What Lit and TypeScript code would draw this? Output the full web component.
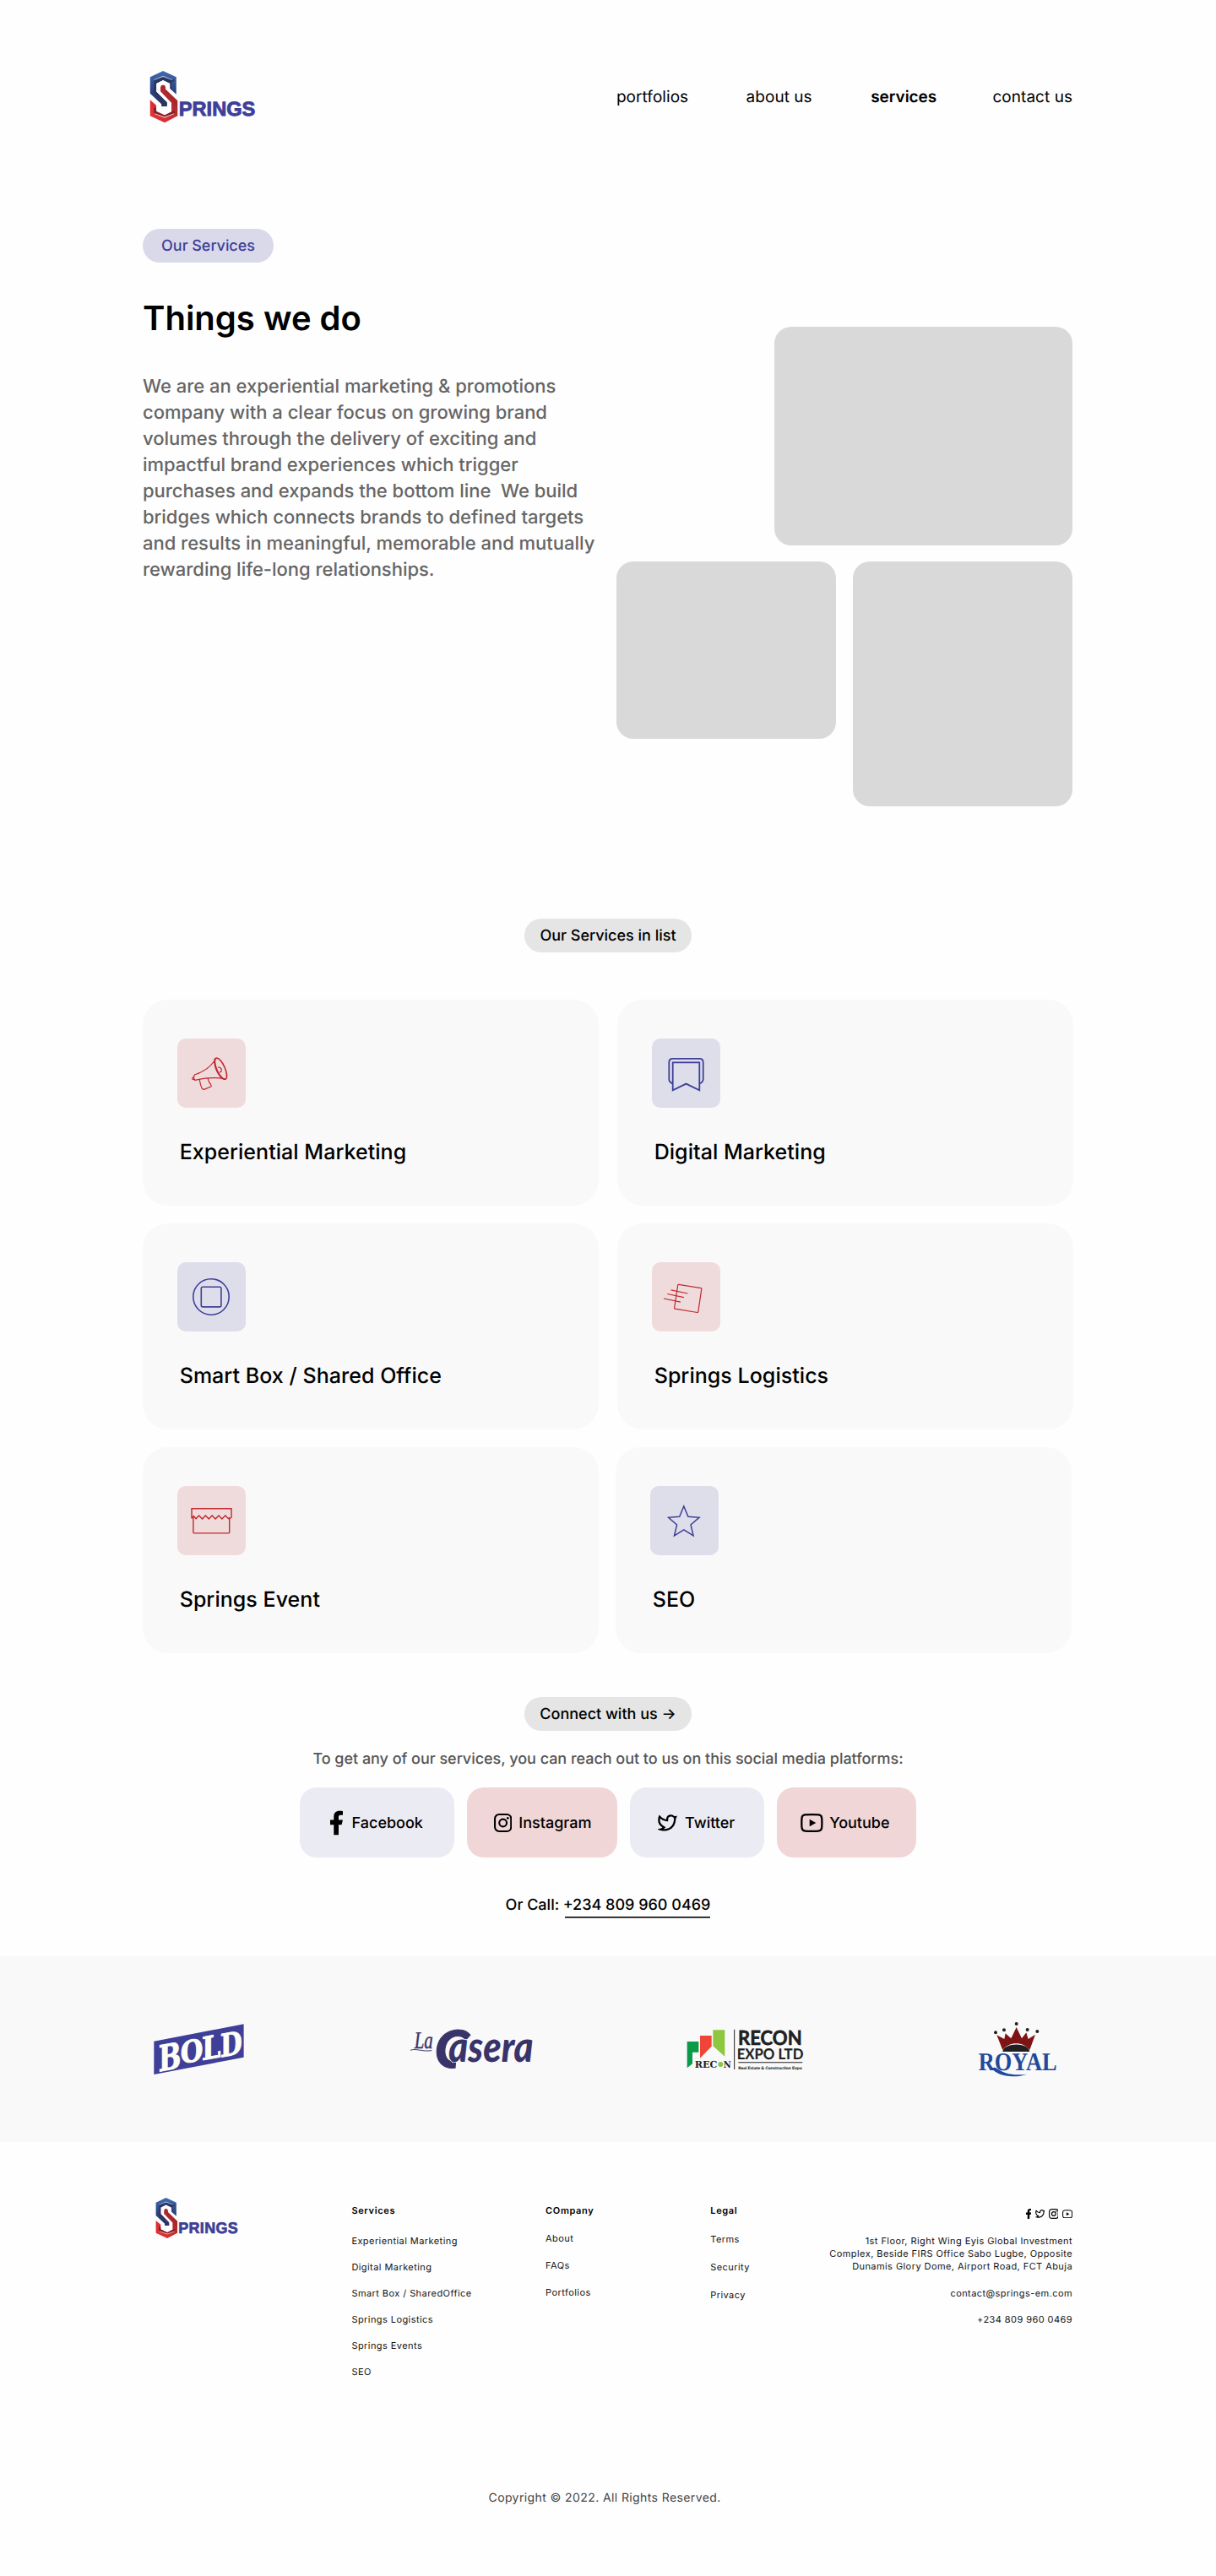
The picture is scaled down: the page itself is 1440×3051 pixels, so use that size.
import { LitElement, html, css, svg, nothing } from "lit";
import { customElement, property } from "lit/decorators.js";

const RED = "#c0282d";
const BLUE = "#3e3f98";

const facebook = html`<svg class="ico fb" viewBox="7 2 10.5 20"><path d="M14 13.5h2.5l1-4H14v-2c0-1.03 0-2 2-2h1.5V2.14c-.326-.043-1.557-.14-2.857-.14C11.928 2 10 3.657 10 6.7v2.8H7v4h3V22h4v-8.5z"/></svg>`;
const instagram = html`<svg class="ico ig" viewBox="0 0 21.3 22"><rect x="1.05" y="1.05" width="19.2" height="19.9" rx="5" fill="none" stroke="#000" stroke-width="2.1"/><circle cx="10.65" cy="11" r="4.4" fill="none" stroke="#000" stroke-width="2.1"/><circle cx="16.3" cy="5.4" r="1.4"/></svg>`;
const twitter = html`<svg class="ico tw" viewBox="1.86 3.38 19.6 17"><path d="M15.3 5.55a2.9 2.9 0 0 0-2.9 2.847l-.028 1.575a.6.6 0 0 1-.68.583l-1.561-.212c-2.054-.28-4.022-1.226-5.91-2.799-.598 3.31.57 5.603 3.383 7.372l1.747 1.098a.6.6 0 0 1 .034.993L7.793 18.17c.947.059 1.846.017 2.592-.131 4.718-.942 7.855-4.492 7.855-10.348 0-.478-1.012-2.141-2.94-2.141zm-4.9 2.81a4.9 4.9 0 0 1 8.385-3.355c.711-.005 1.316.175 2.669-.645-.335 1.64-.5 2.352-1.214 3.331 0 7.642-4.697 11.358-9.463 12.309-3.268.652-8.02-.419-9.382-1.841.694-.054 3.514-.357 5.144-1.55C5.16 15.7-.329 12.47 3.278 3.786c1.693 1.977 3.41 3.323 5.15 4.037 1.158.475 1.442.465 1.973.538z"/></svg>`;
const youtube = html`<svg class="ico yt" viewBox="0 0 26.7 22"><path fill="none" stroke="#000" stroke-width="2.3" d="M13.35 1.15c4 0 6.500.1 8.100.3 2.300.3 3.500 1.500 3.700 3.600.2 1.900.25 3.600.25 5.950s-.05 4.050-.25 5.950c-.2 2.100-1.400 3.300-3.700 3.600-1.600.2-4.100.3-8.100.3s-6.500-.1-8.100-.3c-2.300-.3-3.500-1.500-3.700-3.600-.2-1.900-.25-3.600-.25-5.950s.05-4.050.25-5.950c.2-2.100 1.400-3.300 3.700-3.600 1.600-.2 4.100-.3 8.100-.3z"/><path d="M10.700 6.700l7.600 4.300-7.600 4.300z"/></svg>`;

const icons: Record<string, unknown> = {
  megaphone: svg`<g stroke=${RED} stroke-width="1.2" stroke-linejoin="round">
    <ellipse cx="51.500" cy="35.700" rx="4.800" ry="13.600" transform="rotate(-24 51.500 35.700)" stroke-width="1.600"/>
    <path d="M44.800 23.300c-2 2.500-1 9.500 2.500 16.500 3 5.800 6.500 9 10 8.500"/>
    <path d="M43.500 27c-5.500 7.800-13 12.700-23.200 16l-.9 3.400 1.500 3c10-2 21-4.200 35.500-1.600"/>
    <path d="M19.700 45.500l-1.900 1.300.3 1.700 2.200.2M26.200 48.500c.6 4.200 1.700 8.100 3.300 11.200l2.400.7 8.300-3.600-.2-1.600c-2-2.100-3.300-5.200-4.100-8.500"/>
    <path d="M47.800 34.200c2-.7 4.300.6 4.500 2.900.1 1.600-.9 2.700-2.300 3"/></g>`,
  bookmark: svg`<g stroke=${BLUE} stroke-width="1.800">
    <path d="M24.300 53.300c-2.300-.9-4-2.600-4-5.200V28.300c0-2.700 1.700-4.400 4.400-4.400h31.600c2.700 0 4.400 1.700 4.400 4.400v19.800c0 2.600-1.400 4.300-4 5.200"/>
    <path d="M24.700 28.400h31.600v32.900l-15.800-7.700-15.800 7.700z"/></g>`,
  box: svg`<g stroke=${BLUE} stroke-width="1.600"><circle cx="40" cy="41" r="21.200"/><rect x="28.300" y="29.300" width="23.600" height="23.600" rx="1.800"/></g>`,
  parcel: svg`<g stroke=${RED} stroke-width="1.200">
    <path stroke-linejoin="round" d="M31.700 26.400l26.300 4.200c.6.100.9.400.8 1l-4 27.100c-.1.600-.4.900-1 .8l-26.400-4.300c-.6-.1-.9-.4-.8-1l4.100-27c.1-.6.400-.9 1-.8z"/>
    <path d="M22.600 32.800l19.700 4.200M18.200 37.500l19.700 4.200M14 43l19.900 4.200"/></g>`,
  store: svg`<g stroke=${RED} stroke-width="1.400">
    <path d="M17 38.200V26.800h47v11.400"/>
    <path d="M17 38.200l2.200-2.700 2.900 3.300 3.500-3.800 3.900 4 3.900-4 3.900 4 3.900-4 3.900 4 3.900-4 3.900 4 3.900-4 3.900 3.800 2.200-.6"/>
    <path d="M18.900 37v17.700c0 .8.400 1.200 1.200 1.200h40.400c.8 0 1.200-.4 1.200-1.200V37"/></g>`,
  star: svg`<path stroke=${BLUE} stroke-width="1.500" d="M39.800 24l5.100 12.300 13.100 1-10 8.600 3.100 12.900-11.300-7-11.300 7 3.100-12.900-10-8.600 13.100-1z"/>`,
};

const wordmark = svg`
  <defs>
    <linearGradient id="b" x1="0" y1="0" x2="0" y2="1"><stop offset="0" stop-color="#416bb3"/><stop offset=".5" stop-color="#2f4684"/><stop offset="1" stop-color="#28305c"/></linearGradient>
    <linearGradient id="r" x1="1" y1="0" x2="0" y2="1"><stop offset="0" stop-color="#7d1f26"/><stop offset=".5" stop-color="#c92c31"/><stop offset="1" stop-color="#ee3338"/></linearGradient>
  </defs>
  <g transform="scale(.38268 .33333) translate(-70 -72)">
    <path fill="url(#b)" d="M153 155V94L112 72 72 94v58l35 38v8h17v-14L91 146v-30l21-12 22 12v20z"/>
    <path fill="#2b3561" d="M147 104L112 92 84 104v46l28 38v10h12v-14L91 146v-30l21-12 22 12v18l4 3V112l9-4z"/>
    <path fill="#b9c4dc" d="M84 103l28-14 29 14v2l-29-12-28 12z"/>
    <path fill="url(#r)" d="M72 175v57l45 24 40-24v-54l-37-41c0-11-2-15-8-15s-8 4-8 15v8l34 40v32l-21 12-26-14v-21z"/>
    <path fill="#7b2227" d="M84 200v22l33 14 31-14v-10l-10 6-21 12-26-14v-11z"/>
    <path fill="#e8b3b3" d="M86 223l31 12 29-12v3l-29 13-31-13z"/>
  </g>
  <text x="34.800" y="53.500" font-family="'Liberation Sans', Arial, sans-serif" font-weight="700" font-size="23.600" fill=${BLUE} stroke=${BLUE} stroke-width=".9" textLength="90.500" lengthAdjust="spacingAndGlyphs">PRINGS</text>`;

@customElement("springs-logo")
class SpringsLogo extends LitElement {
  static styles = css`
    :host { display: block; }
    svg { display: block; width: 100%; height: 100%; overflow: visible; }
  `;
  render() {
    return html`<svg viewBox="0 0 126 61.300">${wordmark}</svg>`;
  }
}

@customElement("service-card")
class ServiceCard extends LitElement {
  @property() icon = "";
  @property() name = "";
  @property() tone = "";
  static styles = css`
    :host { display: block; }
    .card { box-sizing: border-box; width: 540px; height: 244px; padding: 46px 41px; border-radius: 30px; background: #f9f9f9; }
    .tile { width: 81px; height: 82px; border-radius: 10px; }
    .red { background: #efdbdc; }
    .blue { background: #dedeeb; }
    svg { display: block; }
    .name { margin: 38px 0 0 2.700px; font-size: 25px; font-weight: 500; line-height: 30px; letter-spacing: 0.04px; }
  `;
  render() {
    return html`<div class="card">
      <div class="tile ${this.tone}"><svg width="81" height="82" viewBox="0 0 81 82" fill="none">${icons[this.icon] ?? nothing}</svg></div>
      <div class="name">${this.name}</div>
    </div>`;
  }
}

const rows = [
  [["megaphone", "red", "Experiential Marketing"], ["bookmark", "blue", "Digital Marketing"]],
  [["box", "blue", "Smart Box / Shared Office"], ["parcel", "red", "Springs Logistics"]],
  [["store", "red", "Springs Event"], ["star", "blue", "SEO"]],
];

const socials: [string, string, unknown][] = [
  ["facebook", "Facebook", facebook],
  ["instagram", "Instagram", instagram],
  ["twitter", "Twitter", twitter],
  ["youtube", "Youtube", youtube],
];

const columns: [string, string, string[]][] = [
  ["c1", "Services", ["Experiential Marketing", "Digital Marketing", "Smart Box / SharedOffice", "Springs Logistics", "Springs Events", "SEO"]],
  ["c2", "COmpany", ["About", "FAQs", "Portfolios"]],
  ["c3", "Legal", ["Terms", "Security", "Privacy"]],
];

@customElement("app-root")
class AppRoot extends LitElement {
  static styles = css`
    :host { display: block; width: 1440px; height: 3051px; overflow: hidden; background: #fefefe; color: #000; font-family: Inter, sans-serif; text-rendering: geometricPrecision; }
    * { box-sizing: border-box; margin: 0; padding: 0; }
    header { display: flex; align-items: center; justify-content: space-between; height: 145.300px; padding: 84px 170px 0 177px; }
    header springs-logo { width: 126px; height: 61.300px; }
    nav { display: grid; grid-template-columns: 153.600px 147.700px 144.200px 94.600px; font-size: 19px; line-height: 24px; letter-spacing: 0.05px; white-space: nowrap; }
    nav .active { font-weight: 600; letter-spacing: -0.05px; }
    .hero { display: flex; justify-content: space-between; padding: 125.700px 170px 0 169px; height: 942.700px; }
    .pill { display: flex; align-items: center; justify-content: center; height: 40px; padding-top: 2px; border-radius: 20px; font-size: 18px; font-weight: 500; line-height: 22px; white-space: nowrap; }
    .pill.blue { width: 155px; background: #d9d9ea; color: #3e3f98; letter-spacing: -0.05px; }
    .pill.grey { width: 198px; background: #e5e5e5; margin: 0 auto; }
    h1 { margin-top: 42.500px; font-size: 40px; font-weight: 600; line-height: 48px; }
    .lead { margin-top: 42px; font-size: 22px; font-weight: 500; line-height: 31px; color: #666; white-space: pre; letter-spacing: -0.02px; }
    .collage { display: flex; flex-direction: column; gap: 19px; width: 540px; padding-top: 116px; }
    .collage div { border-radius: 20px; background: #d9d9d9; }
    .collage .wide { width: 353px; height: 259px; align-self: flex-end; }
    .collage .pair { display: flex; gap: 20px; border-radius: 0; background: none; }
    .collage .short { width: 260px; height: 210px; }
    .collage .tall { width: 260px; height: 290px; }
    .cards { display: flex; flex-direction: column; gap: 21px; padding: 56px 0 52px 169px; }
    .row { display: flex; gap: 22px; }
    .row:last-child { gap: 20px; }
    .reach { margin-top: 23px; text-align: center; font-size: 18px; font-weight: 500; line-height: 22px; letter-spacing: -0.03px; color: #555; }
    .social { display: flex; justify-content: center; gap: 15px; margin-top: 22px; }
    .btn { display: flex; align-items: center; height: 83px; padding-top: 1px; border-radius: 20px; background: #ebebf4; font-size: 18px; font-weight: 500; line-height: 22px; }
    .btn span { padding-top: 2.500px; }
    .btn.instagram, .btn.youtube { background: #f1d6d7; }
    .btn.facebook { width: 183px; padding-left: 36px; gap: 10.600px; }
    .btn.instagram { width: 178px; padding-left: 32px; gap: 8px; }
    .btn.twitter { width: 159px; padding-left: 33px; gap: 9.300px; }
    .btn.youtube { width: 165px; padding-left: 28px; gap: 7.500px; }
    .ico { display: block; flex: none; }
    .btn .fb { width: 15px; height: 30px; }
    .btn .ig { width: 21.300px; height: 22px; }
    .btn .tw { width: 22.800px; height: 19.800px; }
    .btn .yt { width: 26.700px; height: 22px; }
    .call { display: flex; justify-content: center; gap: 4.500px; margin-top: 46px; font-size: 18px; font-weight: 500; line-height: 22px; white-space: pre; }
    .phone { height: 26px; background: linear-gradient(#000, #000) 2px 100% / 100% 1.600px no-repeat; }
    .brands { display: flex; align-items: center; height: 220px; margin-top: 45px; padding-left: 182px; background: #f9f9f9; }
    .brands svg { display: block; flex: none; overflow: visible; }
    .casera { margin-left: 195.700px; }
    .recon { margin-left: 180.400px; }
    .royal { margin-left: 206.600px; }
    .foot { display: grid; grid-template-columns: 232.100px 229.700px 195.200px 1fr; height: 412.500px; padding: 66px 170px 0 184.300px; font-size: 11px; line-height: 15px; letter-spacing: 0.43px; color: #111; white-space: pre; }
    .foot springs-logo { width: 98.600px; height: 48px; }
    .col { display: flex; flex-direction: column; padding-top: 8px; }
    .col h2 { font-size: 11px; font-weight: 600; line-height: 15px; letter-spacing: 0.65px; color: #000; }
    .c1 { gap: 16px; } .c1 h2 { margin-bottom: 5.500px; }
    .c2 { gap: 17px; } .c2 h2 { margin-bottom: 1.500px; }
    .c3 { gap: 18px; } .c3 h2 { margin-bottom: 1.300px; }
    .where { display: flex; flex-direction: column; align-items: flex-end; gap: 16.500px; padding-top: 13px; text-align: right; }
    .lastcol { display: flex; justify-content: space-between; }
    .mini { display: flex; align-items: center; gap: 4.500px; height: 12px; margin-bottom: 3px; }
    .mini .fb { width: 6.300px; height: 12px; }
    .mini .tw { width: 11.400px; height: 10px; }
    .mini .ig { width: 11.800px; height: 12px; }
    .mini .yt { width: 12.200px; height: 10.600px; }
    .copy { padding-left: 578.500px; font-size: 14px; line-height: 20px; letter-spacing: 0.4px; color: #444; }
  `;

  private brands() {
    return html`
      <svg class="bold" width="107.300" height="60.700" viewBox="96 82 322 182">
        <path fill="#3e3f98" d="M97 144L416 83v118L97 262z"/>
        <g transform="translate(113 252) skewY(-10.500)" font-family="'DejaVu Serif', serif" font-weight="700" fill="#fffef6" stroke="#fffef6" stroke-width="3">
          <text x="0" y="0" font-size="128" textLength="80" lengthAdjust="spacingAndGlyphs">B</text>
          <text x="78" y="-13" font-size="107" textLength="80" lengthAdjust="spacingAndGlyphs">O</text>
          <text x="154" y="-12" font-size="113" textLength="67" lengthAdjust="spacingAndGlyphs">L</text>
          <text x="219" y="-10" font-size="113" textLength="78" lengthAdjust="spacingAndGlyphs">D</text>
        </g>
      </svg>
      <svg class="casera" width="147.300" height="47.300" viewBox="1005 101 442 142">
        <g fill="#38346a" stroke="#38346a">
          <text x="1022" y="171" font-family="'Liberation Serif', serif" font-style="italic" font-size="86" textLength="66" lengthAdjust="spacingAndGlyphs" stroke-width="1.500">La</text>
          <path fill="none" stroke-width="3" d="M1008 177c20-8 40 6 76 1"/>
          <g font-family="Lato, sans-serif" font-style="italic" font-weight="900">
            <text x="1094" y="239" font-size="184" stroke="#38346a" stroke-width="3" textLength="122" lengthAdjust="spacingAndGlyphs">C</text>
            <path fill="#f9f9f9" stroke="none" d="M1172 200h40v50h-44z"/>
            <text x="1144" y="217" font-size="152" stroke="#f9f9f9" stroke-width="4" paint-order="stroke" textLength="301" lengthAdjust="spacingAndGlyphs">asera</text>
          </g>
        </g>
      </svg>
      <svg class="recon" width="138.700" height="48.700" viewBox="98 98 416 146">
        <path fill="#0a9a4a" d="M100 143h41v38h-22v41l-19 15z"/>
        <path fill="#f04438" d="M146 122h41v38l-41 42z"/>
        <path fill="#8dc63f" d="M192 102h42v94l-42-37z"/>
        <g fill="#221f20">
          <g font-family="'DejaVu Serif', serif" font-weight="700" font-size="33.500">
            <text x="127" y="237" textLength="80" lengthAdjust="spacingAndGlyphs">REC</text>
            <text x="229" y="237" textLength="27" lengthAdjust="spacingAndGlyphs">N</text>
          </g>
          <path d="M266.500 100h3v142h-3zM282 215.500h228v3.500H282z"/>
          <g font-family="Lato, sans-serif" font-weight="700" stroke="#221f20">
            <text x="281" y="156" font-size="71" stroke-width="2" textLength="227" lengthAdjust="spacingAndGlyphs">RECON</text>
            <text x="277" y="207" font-size="53" stroke-width=".5" textLength="236" lengthAdjust="spacingAndGlyphs">EXPO LTD</text>
            <text x="282" y="241" font-size="14" stroke-width=".3" textLength="226" lengthAdjust="spacingAndGlyphs">Real Estate &amp; Construction Expo</text>
          </g>
        </g>
        <circle cx="219" cy="224" r="9" fill="#8dc63f"/>
      </svg>
      <svg class="royal" width="94" height="66" viewBox="1134 74 282 198">
        <path fill="#7f1416" d="M1201 123l27 14 4-20 20 18 19-40 19 40 16-21 7 23 25-16-20 55c-22-30-72-32-96 0z"/>
        <path fill="#221f20" d="M1222 182c3-33 92-35 96 0z"/>
        <g fill="#221f20"><circle cx="1197" cy="114" r="6"/><circle cx="1227" cy="105" r="6"/><circle cx="1271" cy="83" r="6"/><circle cx="1310" cy="104" r="6"/><circle cx="1345" cy="110" r="6"/></g>
        <text x="1136" y="247" font-family="'Liberation Serif', serif" font-weight="700" font-size="91" fill="#1f4a9b" textLength="279" lengthAdjust="spacingAndGlyphs">ROYAL</text>
        <path fill="#1f4a9b" d="M1180 240c18 20 44 30 78 30 20 0 36-3 50-8-50 6-82-2-112-24z"/>
      </svg>`;
  }

  render() {
    return html`
      <header>
        <springs-logo></springs-logo>
        <nav><span>portfolios</span><span>about us</span><span class="active">services</span><span>contact us</span></nav>
      </header>
      <section class="hero">
        <div>
          <div class="pill blue">Our Services</div>
          <h1>Things we do</h1>
          <p class="lead">${[
            "We are an experiential marketing & promotions",
            "company with a clear focus on growing brand",
            "volumes through the delivery of exciting and",
            "impactful brand experiences which trigger",
            "purchases and expands the bottom line  We build",
            "bridges which connects brands to defined targets",
            "and results in meaningful, memorable and mutually",
            "rewarding life-long relationships.",
          ].join("\n")}</p>
        </div>
        <div class="collage">
          <div class="wide"></div>
          <div class="pair"><div class="short"></div><div class="tall"></div></div>
        </div>
      </section>
      <div class="pill grey">Our Services in list</div>
      <section class="cards">
        ${rows.map(r => html`<div class="row">${r.map(([i, t, n]) => html`<service-card icon=${i} tone=${t} name=${n}></service-card>`)}</div>`)}
      </section>
      <div class="pill grey">Connect with us →</div>
      <p class="reach">To get any of our services, you can reach out to us on this social media platforms:</p>
      <div class="social">${socials.map(([c, n, i]) => html`<div class="btn ${c}">${i}<span>${n}</span></div>`)}</div>
      <div class="call"><span>Or Call:</span><span class="phone">+234 809 960 0469</span></div>
      <section class="brands">${this.brands()}</section>
      <footer>
        <div class="foot">
          <springs-logo></springs-logo>
          ${columns.slice(0, 2).map(([c, h, items]) => html`<div class="col ${c}"><h2>${h}</h2>${items.map(t => html`<span>${t}</span>`)}</div>`)}
          <div class="lastcol">
            ${columns.slice(2).map(([c, h, items]) => html`<div class="col ${c}"><h2>${h}</h2>${items.map(t => html`<span>${t}</span>`)}</div>`)}
            <div class="where">
              <div class="mini">${facebook}${twitter}${instagram}${youtube}</div>
              <span>${"1st Floor, Right Wing Eyis Global Investment\nComplex, Beside FIRS Office Sabo Lugbe, Opposite\nDunamis Glory Dome, Airport Road, FCT Abuja"}</span>
              <span>contact@springs-em.com</span>
              <span>+234 809 960 0469</span>
            </div>
          </div>
        </div>
        <div class="copy">Copyright © 2022. All Rights Reserved.</div>
      </footer>`;
  }
}
